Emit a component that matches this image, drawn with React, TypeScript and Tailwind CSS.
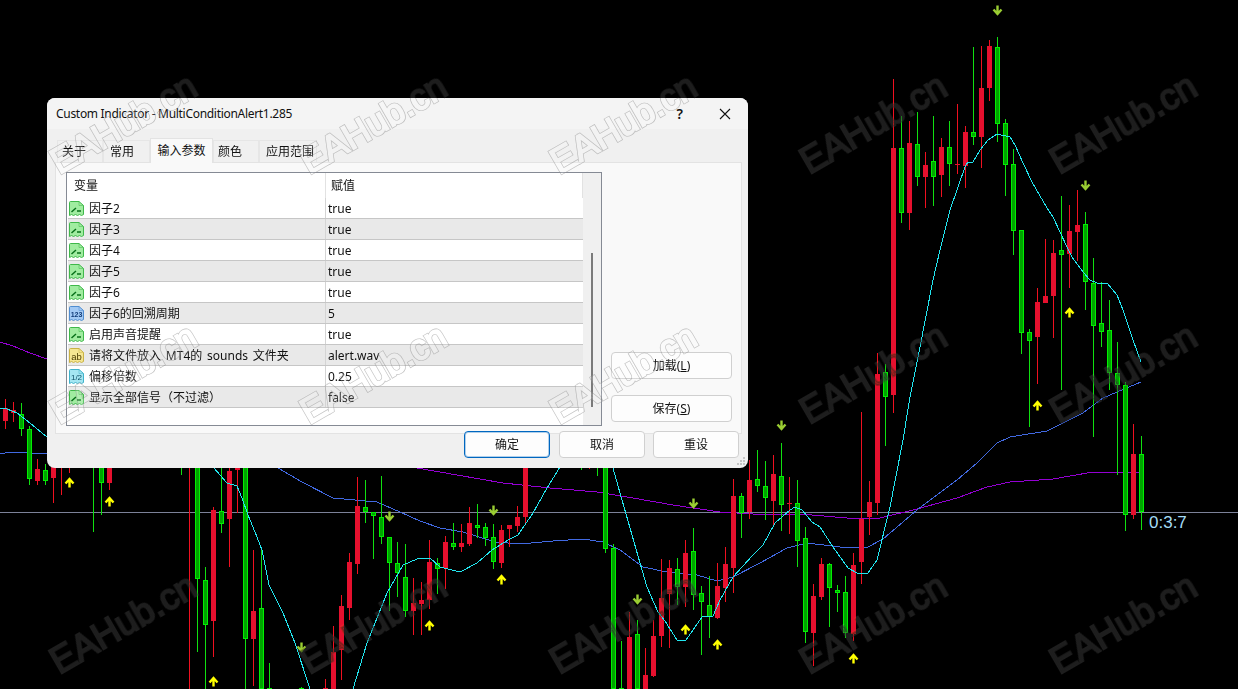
import type { ReactNode } from 'react';

type Candle = [number, number, number, number, number, 'r' | 'g'];

// x, wick top, wick bottom, body top, body bottom, colour
const candles: Candle[] = [
  [5, 399, 429, 408, 421, 'r'],
  [13, 402, 422, 410, 413, 'r'],
  [21, 403, 436, 414, 429, 'g'],
  [29, 426, 485, 429, 479, 'g'],
  [37, 459, 485, 469, 481, 'r'],
  [45, 464, 485, 470, 481, 'g'],
  [53, 450, 503, 450, 478, 'r'],
  [61, 450, 495, 450, 451, 'r'],
  [93, 450, 532, 450, 467, 'g'],
  [101, 450, 515, 450, 483, 'g'],
  [109, 450, 490, 450, 483, 'r'],
  [69, 450, 473, 450, 451, 'r'],
  [181, 450, 475, 450, 451, 'g'],
  [189, 450, 689, 450, 468, 'r'],
  [197, 450, 652, 450, 579, 'g'],
  [205, 567, 689, 580, 625, 'g'],
  [213, 507, 657, 510, 621, 'r'],
  [221, 450, 533, 511, 524, 'g'],
  [229, 450, 567, 471, 519, 'r'],
  [237, 450, 513, 450, 470, 'r'],
  [245, 450, 689, 450, 639, 'g'],
  [253, 550, 686, 611, 639, 'r'],
  [261, 550, 689, 608, 689, 'g'],
  [269, 663, 689, 688, 689, 'g'],
  [301, 687, 689, 688, 689, 'g'],
  [325, 679, 689, 688, 689, 'r'],
  [333, 626, 689, 652, 689, 'r'],
  [341, 595, 680, 606, 650, 'r'],
  [349, 553, 620, 562, 608, 'r'],
  [357, 477, 574, 506, 564, 'r'],
  [365, 480, 523, 507, 512, 'g'],
  [373, 512, 559, 512, 516, 'g'],
  [381, 476, 544, 517, 537, 'g'],
  [389, 537, 611, 537, 563, 'g'],
  [397, 542, 597, 563, 573, 'g'],
  [405, 544, 617, 577, 611, 'g'],
  [413, 578, 635, 603, 611, 'r'],
  [421, 582, 635, 600, 604, 'r'],
  [429, 540, 609, 562, 600, 'r'],
  [437, 558, 594, 563, 569, 'g'],
  [445, 536, 589, 542, 568, 'r'],
  [453, 523, 550, 543, 547, 'g'],
  [461, 524, 552, 543, 547, 'r'],
  [469, 507, 546, 523, 544, 'r'],
  [477, 504, 538, 525, 528, 'g'],
  [485, 523, 546, 527, 538, 'g'],
  [493, 524, 569, 537, 562, 'g'],
  [501, 525, 568, 530, 563, 'r'],
  [509, 525, 547, 525, 529, 'r'],
  [517, 506, 532, 517, 526, 'r'],
  [525, 450, 525, 450, 517, 'r'],
  [581, 450, 470, 450, 451, 'g'],
  [589, 450, 469, 450, 451, 'r'],
  [597, 450, 476, 450, 468, 'g'],
  [605, 450, 553, 450, 549, 'g'],
  [613, 544, 689, 548, 689, 'g'],
  [621, 641, 689, 688, 689, 'g'],
  [629, 612, 689, 637, 689, 'r'],
  [637, 620, 689, 634, 689, 'g'],
  [645, 648, 689, 675, 689, 'r'],
  [653, 620, 677, 636, 676, 'r'],
  [661, 559, 647, 598, 636, 'r'],
  [669, 560, 648, 568, 594, 'r'],
  [677, 558, 605, 569, 587, 'g'],
  [685, 540, 607, 553, 587, 'r'],
  [693, 528, 610, 551, 595, 'g'],
  [701, 586, 655, 593, 602, 'g'],
  [709, 576, 638, 605, 617, 'g'],
  [717, 563, 619, 586, 618, 'r'],
  [725, 547, 602, 564, 588, 'r'],
  [733, 479, 593, 496, 568, 'r'],
  [741, 493, 538, 496, 513, 'g'],
  [749, 460, 519, 480, 512, 'r'],
  [757, 450, 492, 479, 486, 'g'],
  [765, 461, 520, 486, 498, 'g'],
  [773, 455, 527, 474, 501, 'r'],
  [781, 443, 531, 476, 505, 'g'],
  [789, 477, 534, 503, 504, 'r'],
  [797, 480, 567, 503, 541, 'g'],
  [805, 527, 643, 538, 632, 'g'],
  [813, 584, 666, 596, 633, 'r'],
  [821, 558, 600, 564, 597, 'r'],
  [829, 563, 627, 564, 588, 'g'],
  [837, 585, 612, 590, 593, 'g'],
  [845, 576, 638, 592, 633, 'g'],
  [853, 553, 641, 565, 634, 'r'],
  [861, 412, 584, 519, 562, 'r'],
  [869, 481, 535, 502, 517, 'r'],
  [877, 353, 515, 374, 503, 'r'],
  [885, 364, 446, 372, 397, 'g'],
  [893, 79, 413, 148, 395, 'r'],
  [901, 116, 223, 148, 213, 'g'],
  [909, 121, 230, 143, 213, 'r'],
  [917, 112, 186, 144, 177, 'g'],
  [925, 152, 208, 165, 177, 'r'],
  [933, 116, 206, 161, 177, 'g'],
  [941, 138, 197, 147, 175, 'r'],
  [949, 121, 186, 147, 164, 'g'],
  [957, 104, 174, 164, 165, 'r'],
  [965, 126, 188, 132, 166, 'r'],
  [973, 47, 145, 132, 137, 'g'],
  [981, 46, 168, 88, 137, 'r'],
  [989, 40, 101, 46, 88, 'r'],
  [997, 37, 142, 47, 124, 'g'],
  [1005, 119, 196, 123, 165, 'g'],
  [1013, 149, 255, 164, 231, 'g'],
  [1021, 230, 354, 230, 333, 'g'],
  [1029, 329, 427, 332, 341, 'g'],
  [1037, 288, 384, 302, 337, 'r'],
  [1045, 239, 303, 296, 303, 'r'],
  [1053, 240, 338, 253, 296, 'r'],
  [1061, 196, 390, 250, 255, 'g'],
  [1069, 205, 288, 231, 254, 'r'],
  [1077, 190, 261, 225, 232, 'r'],
  [1085, 212, 310, 224, 282, 'g'],
  [1093, 258, 437, 283, 326, 'g'],
  [1101, 282, 347, 323, 332, 'g'],
  [1109, 300, 390, 330, 373, 'g'],
  [1117, 342, 475, 373, 385, 'g'],
  [1125, 382, 531, 385, 515, 'g'],
  [1133, 424, 519, 454, 515, 'r'],
  [1141, 436, 530, 454, 512, 'g'],
];

const cyanLine =
  '0,408 7,409 17,413 25,419 47,437 M214,468 227,483 237,486 242,498 248,515 257,537 262,550 269,585 283,613 295,643 310,689 M353,689 367,643 387,593 403,565 417,559 430,558 440,567 460,572 477,563 492,550 508,540 518,535 533,513 547,488 560,467 570,450 M600,450 613,468 620,493 640,563 647,587 658,612 665,621 677,640 686,640 702,617 713,616 720,600 733,577 753,555 763,545 775,523 790,510 795,507 802,510 812,522 820,527 833,547 848,568 857,573 868,573 877,560 890,507 903,440 910,397 920,347 933,280 940,250 950,210 958,187 965,167 968,162 973,162 980,150 988,140 997,134 1010,137 1015,145 1023,163 1032,182 1047,208 1053,217 1067,247 1072,257 1083,272 1090,280 1097,283 1107,283 1117,295 1123,310 1133,340 1141,362';
const blueLine =
  '0,454 10,452 25,452 30,453 47,454 M278,468 302,482 333,498 377,502 400,512 420,521 440,528 463,532 495,542 520,544 553,541 583,539 603,542 620,550 643,567 667,572 697,575 717,581 733,577 760,563 787,548 807,543 840,547 868,547 883,539 917,510 957,480 977,463 997,443 1010,437 1047,431 1083,413 1103,398 1117,392 1141,382';
const purpleLine =
  '0,342 13,346 30,353 47,359 M417,468 457,475 503,483 550,488 597,492 633,498 673,505 720,512 753,514 800,514 847,518 880,518 917,509 957,498 987,487 1010,482 1053,479 1093,472 1141,472';

const upArrows = [
  [69, 482], [109, 501], [213, 681], [429, 625], [501, 579], [685, 629], [717, 644], [853, 658], [1037, 405], [1069, 312],
];
const downArrows = [
  [301, 648], [389, 517], [493, 511], [637, 600], [693, 504], [781, 426], [997, 11], [1085, 186],
];

const watermarks = [
  [123, 123], [373, 123], [623, 123], [873, 123], [1123, 123],
  [123, 373], [373, 373], [623, 373], [873, 373], [1123, 373],
  [123, 623], [373, 623], [623, 623], [873, 623], [1123, 623],
];

function toPath(points: string) {
  return points
    .split(' M')
    .map((part) => 'M' + part.replace(/^M/, '').replace(/ /g, ' L'))
    .join(' ');
}

function WatermarkText({ className, color, width = 0 }: { className?: string; color: string; width?: number }) {
  return (
    <g className={className}>
      {watermarks.map(([x, y]) => (
        <text
          key={`${x}-${y}`}
          x={x}
          y={y + 13}
          textAnchor="middle"
          fontFamily="'Liberation Sans', sans-serif"
          fontSize={36}
          fill={color}
          stroke={width ? color : undefined}
          strokeWidth={width}
          transform={`rotate(-30 ${x} ${y})`}
        >
          EAHub.cn
        </text>
      ))}
    </g>
  );
}

function Chart() {
  return (
    <svg className="absolute inset-0 block" width={1238} height={689} viewBox="0 0 1238 689">
      <rect x={0} y={512} width={1238} height={1} fill="#7c8299" shapeRendering="crispEdges" />
      <g fill="none" strokeWidth={1} shapeRendering="crispEdges">
        <path d={toPath(purpleLine)} stroke="#9400d3" />
        <path d={toPath(blueLine)} stroke="#4169e1" />
      </g>
      <g shapeRendering="crispEdges">
        {candles.map(([x, wt, wb, bt, bb, c]) => (
          <g key={x}>
            <rect x={x} y={wt} width={1} height={wb - wt} fill={c === 'r' ? '#f01020' : '#10e010'} />
            {c === 'r' ? (
              <rect x={x - 2} y={bt} width={5} height={bb - bt} fill="#e6102e" />
            ) : (
              <>
                <rect x={x - 2} y={bt} width={5} height={bb - bt} fill="#00f000" />
                {bb - bt > 2 && <rect x={x - 1} y={bt + 1} width={3} height={bb - bt - 2} fill="#00a400" />}
              </>
            )}
          </g>
        ))}
      </g>
      <path d={toPath(cyanLine)} fill="none" stroke="#22e6f0" strokeWidth={1} shapeRendering="crispEdges" />
      {upArrows.map(([x, y]) => (
        <path
          key={`u${x}`}
          d={`M${x + 0.5} ${y + 5.5}V${y - 3}M${x - 3.5} ${y + 1.5}L${x + 0.5} ${y - 3}L${x + 4.5} ${y + 1.5}`}
          fill="none"
          stroke="#ffff00"
          strokeWidth={2.4}
        />
      ))}
      {downArrows.map(([x, y]) => (
        <path
          key={`d${x}`}
          d={`M${x + 0.5} ${y - 5.5}V${y + 3}M${x - 3.5} ${y - 1.5}L${x + 0.5} ${y + 3}L${x + 4.5} ${y - 1.5}`}
          fill="none"
          stroke="#9acd32"
          strokeWidth={2.4}
        />
      ))}
      <text x={1149} y={528} fontFamily="'Liberation Sans', sans-serif" fontSize={17} fill="#a4dcf6">
        0:3:7
      </text>
      <WatermarkText color="rgba(0,0,0,0.28)" width={2} />
      <WatermarkText className="mix-blend-lighten" color="#1e1e1e" width={2} />
    </svg>
  );
}

const iconStyles = {
  bool: { fill: '#a0eca0', stroke: '#3fb84a' },
  int: { fill: '#a2c9f4', stroke: '#4f8dd0' },
  str: { fill: '#f5e692', stroke: '#c9b244' },
  dbl: { fill: '#a4e6f2', stroke: '#40b2ca' },
};

function ParamIcon({ kind }: { kind: keyof typeof iconStyles }) {
  const s = iconStyles[kind];
  return (
    <svg width={17} height={17} viewBox="0 0 17 17" className="shrink-0">
      <path
        d="M2.5 1.5H11L15.5 5.5V14.5L13.5 15.5L11.5 14.5L9.5 15.5L7.5 14.5L5.5 15.5L3.5 14.5L1.5 15.5V2.5Q1.5 1.5 2.5 1.5Z"
        fill={s.fill}
        stroke={s.stroke}
      />
      <path d="M11 1.5V5.5H15.5" fill="none" stroke={s.stroke} strokeOpacity={0.5} />
      {kind === 'bool' && (
        <path d="M3.5 12L8 8M9 11H13" fill="none" stroke="#08701a" strokeWidth={1.5} />
      )}
      {kind === 'int' && (
        <text x={8.5} y={12} textAnchor="middle" fontSize={7} fontWeight={700} fontFamily="'Liberation Sans', sans-serif" fill="#123c78">
          123
        </text>
      )}
      {kind === 'str' && (
        <text x={8.5} y={12.5} textAnchor="middle" fontSize={9.5} fontFamily="'Liberation Sans', sans-serif" fill="#4a3c00">
          ab
        </text>
      )}
      {kind === 'dbl' && (
        <text x={8.5} y={12} textAnchor="middle" fontSize={8} fontFamily="'Liberation Sans', sans-serif" fill="#0d4f66">
          1/2
        </text>
      )}
    </svg>
  );
}

const params: { name: string; value: string; kind: keyof typeof iconStyles }[] = [
  { name: '因子2', value: 'true', kind: 'bool' },
  { name: '因子3', value: 'true', kind: 'bool' },
  { name: '因子4', value: 'true', kind: 'bool' },
  { name: '因子5', value: 'true', kind: 'bool' },
  { name: '因子6', value: 'true', kind: 'bool' },
  { name: '因子6的回溯周期', value: '5', kind: 'int' },
  { name: '启用声音提醒', value: 'true', kind: 'bool' },
  { name: '请将文件放入 MT4的 sounds 文件夹', value: 'alert.wav', kind: 'str' },
  { name: '偏移倍数', value: '0.25', kind: 'dbl' },
  { name: '显示全部信号（不过滤）', value: 'false', kind: 'bool' },
];

function Tab({ label, className, active }: { label: string; className: string; active?: boolean }) {
  return (
    <div
      className={
        active
          ? `relative z-10 -mb-px flex h-[25px] items-start border border-b-0 border-[#e3e3e3] bg-[#f9f9f9] pt-[3px] ${className}`
          : `flex h-[22px] items-center border border-b-0 border-[#e6e6e6] bg-[#f0f0f0] ${className}`
      }
    >
      {label}
    </div>
  );
}

function DialogButton({ children, primary, className }: { children: ReactNode; primary?: boolean; className: string }) {
  return (
    <button
      type="button"
      className={`flex h-[27px] items-center justify-center rounded-[4px] bg-[#fdfdfd] text-[12px] text-[#111] ${
        primary ? 'border border-[#0067c0] shadow-[inset_0_0_0_1px_rgba(0,103,192,0.3)]' : 'border border-[#d0d0d0]'
      } ${className}`}
    >
      {children}
    </button>
  );
}

function Dialog() {
  return (
    <div className="absolute left-[47px] top-[98px] flex h-[370px] w-[701px] flex-col overflow-hidden rounded-lg bg-[#f0f0f0] font-['Noto_Sans','Noto_Sans_CJK_SC',sans-serif] text-[12px] text-[#111]">
      <div className="flex h-[31px] shrink-0 items-center bg-[#f4f4f4] pl-[9px]">
        <span className="flex-1 tracking-[-0.3px]">Custom Indicator - MultiConditionAlert1.285</span>
        <span className="mr-[36px] text-[14px] font-semibold">?</span>
        <svg width={12} height={12} viewBox="0 0 12 12" className="mr-[17px]">
          <path d="M1 1L11 11M11 1L1 11" stroke="#111" strokeWidth={1.1} fill="none" />
        </svg>
      </div>
      <div className="flex h-[33px] shrink-0 items-end pl-[10px]">
        <Tab label="关于" className="w-[46px] pl-[4px]" />
        <Tab label="常用" className="w-[47px] pl-[6px]" />
        <Tab label="输入参数" className="w-[63px] justify-center" active />
        <Tab label="颜色" className="w-[46px] pl-[4px]" />
        <Tab label="应用范围" className="w-[58px] pl-[6px]" />
      </div>
      <div className="ml-[8px] flex h-[272px] w-[687px] shrink-0 border border-[#e3e3e3] bg-[#f9f9f9] pl-[10px] pt-[9px]">
        <div className="flex h-[254px] w-[536px] shrink-0 border border-[#858a94] bg-white">
          <div className="w-[516px] shrink-0 pl-px">
            <div className="flex h-[25px] items-center">
              <div className="h-full w-[257px] pl-[6px] leading-[25px]">变量</div>
              <div className="flex h-full flex-1 border-l border-[#e2e2e2] pl-[5px] leading-[25px]">
                <span className="flex-1">赋值</span>
                <span className="h-full w-px bg-[#e2e2e2]" />
              </div>
            </div>
            {params.map((p, i) => (
              <div
                key={p.name}
                className={`flex h-[21px] items-center border-b border-[#c6c6c6] ${i % 2 === 1 ? 'bg-[#e9e9e9]' : 'bg-white'}`}
              >
                <div className="flex h-full w-[257px] items-center">
                  <ParamIcon kind={p.kind} />
                  <span className="ml-[4px] whitespace-nowrap pt-[2px] [word-spacing:1.7px]">{p.name}</span>
                </div>
                <div className="flex h-full flex-1 items-center border-l border-[#d4d4d4] pl-[2px] pt-[2px]">{p.value}</div>
              </div>
            ))}
          </div>
          <div className="w-[18px] bg-[#f0f0f0] pl-[8px] pt-[80px]">
            <div className="h-[154px] w-[2px] bg-[#7a7a7a]" />
          </div>
        </div>
        <div className="ml-[9px] flex flex-col gap-[16px] pt-[180px]">
          <DialogButton className="w-[121px]">
            加载(<span className="underline">L</span>)
          </DialogButton>
          <DialogButton className="w-[121px]">
            保存(<span className="underline">S</span>)
          </DialogButton>
        </div>
      </div>
      <div className="relative z-10 -mt-[3px] flex justify-end pr-[9px]">
        <DialogButton primary className="w-[86px]">
          确定
        </DialogButton>
        <DialogButton className="ml-[9px] w-[86px]">取消</DialogButton>
        <DialogButton className="ml-[8px] w-[86px]">重设</DialogButton>
      </div>
      <svg className="absolute bottom-[2px] right-[2px]" width={9} height={9} viewBox="0 0 9 9" fill="#c4c4c4">
        <rect x={6} y={0} width={2} height={2} />
        <rect x={3} y={3} width={2} height={2} />
        <rect x={6} y={3} width={2} height={2} />
        <rect x={0} y={6} width={2} height={2} />
        <rect x={3} y={6} width={2} height={2} />
        <rect x={6} y={6} width={2} height={2} />
      </svg>
      <svg className="pointer-events-none absolute inset-0 z-20" width={701} height={370} viewBox="47 98 701 370">
        <defs>
          {/* only the rim of the widened letters is painted, the inside stays clear */}
          <mask id="wm-rim" maskUnits="userSpaceOnUse" x={47} y={98} width={701} height={370}>
            <WatermarkText color="#fff" width={3} />
            <WatermarkText color="#000" width={1.8} />
          </mask>
        </defs>
        <WatermarkText color="rgba(255,255,255,0.12)" width={2} />
        <rect x={47} y={98} width={701} height={370} fill="#8f8f8f" fillOpacity={0.55} mask="url(#wm-rim)" />
      </svg>
    </div>
  );
}

export default function App() {
  return (
    <div className="relative h-[689px] w-[1238px] overflow-hidden bg-black">
      <Chart />
      <Dialog />
    </div>
  );
}
